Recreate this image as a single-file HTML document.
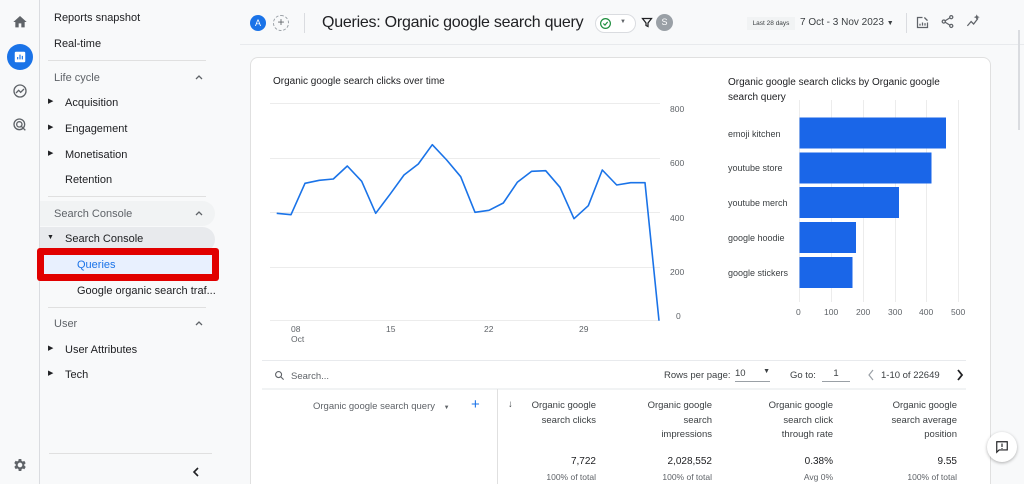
<!DOCTYPE html>
<html><head><meta charset="utf-8"><style>
*{box-sizing:border-box;margin:0;padding:0}
html,body{width:1024px;height:484px;overflow:hidden}
body{background:#f8f9fa;font-family:"Liberation Sans",sans-serif;color:#202124;position:relative}
.a{position:absolute}
.nav{font-size:11px;color:#202124}
.sec{font-size:11px;color:#5f6368}
.t{font-size:9.5px;color:#3c4043}
.g{color:#5f6368}
</style></head><body>
<!-- rail -->
<div class="a" style="left:39px;top:0;width:1px;height:484px;background:#dadce0"></div>
<svg class="a" style="left:12px;top:14px" width="16" height="16" viewBox="0 0 24 24"><path d="M10 20v-6h4v6h5v-8h3L12 3 2 12h3v8z" fill="#5f6368"/></svg>
<div class="a" style="left:7px;top:44px;width:26px;height:26px;border-radius:50%;background:#1a73e8"></div>
<svg class="a" style="left:13px;top:50px" width="14" height="14" viewBox="0 0 24 24"><rect x="3" y="3" width="18" height="18" rx="2" fill="#fff"/><path d="M8 16v-4M12 16V8M16 16v-6" stroke="#1a73e8" stroke-width="2"/></svg>
<svg class="a" style="left:12px;top:83px" width="16" height="16" viewBox="0 0 24 24" fill="none" stroke="#5f6368" stroke-width="2"><circle cx="12" cy="12" r="9"/><path d="M6 15l4-4 3 3 5-5"/></svg>
<svg class="a" style="left:12px;top:117px" width="16" height="16" viewBox="0 0 24 24" fill="none" stroke="#5f6368" stroke-width="2"><circle cx="11" cy="11" r="8"/><circle cx="11" cy="11" r="4"/><path d="M13 13l7 7" /></svg>
<svg class="a" style="left:12px;top:457px" width="16" height="16" viewBox="0 0 24 24"><path d="M19.4 13a7.5 7.5 0 000-2l2.1-1.6-2-3.5-2.5 1a7 7 0 00-1.7-1L15 3h-4l-.4 2.7a7 7 0 00-1.7 1l-2.5-1-2 3.5L6.6 11a7.5 7.5 0 000 2l-2.1 1.6 2 3.5 2.5-1a7 7 0 001.7 1L11 21h4l.4-2.7a7 7 0 001.7-1l2.5 1 2-3.5zM13 15.5a3.5 3.5 0 110-7 3.5 3.5 0 010 7z" fill="#5f6368" transform="translate(-1 0)"/></svg>
<!-- nav -->
<div class="a nav" style="left:54px;top:12px">Reports snapshot</div>
<div class="a nav" style="left:54px;top:38px">Real-time</div>
<div class="a" style="left:48px;top:60px;width:158px;height:1px;background:#e0e0e0"></div>
<div class="a sec" style="left:54px;top:72px">Life cycle</div>
<svg class="a" style="left:194px;top:73px" width="10" height="8" viewBox="0 0 10 8"><path d="M2 6l3-3 3 3" fill="none" stroke="#5f6368" stroke-width="1.3"/></svg>
<div class="a nav" style="left:48px;top:97px;font-size:7px">&#9654;</div><div class="a nav" style="left:65px;top:97px">Acquisition</div>
<div class="a nav" style="left:48px;top:123px;font-size:7px">&#9654;</div><div class="a nav" style="left:65px;top:123px">Engagement</div>
<div class="a nav" style="left:48px;top:149px;font-size:7px">&#9654;</div><div class="a nav" style="left:65px;top:149px">Monetisation</div>
<div class="a nav" style="left:65px;top:174px">Retention</div>
<div class="a" style="left:48px;top:196px;width:158px;height:1px;background:#e0e0e0"></div>
<div class="a" style="left:40px;top:201px;width:175px;height:25px;background:#f1f3f4;border-radius:0 13px 13px 0"></div>
<div class="a sec" style="left:54px;top:208px">Search Console</div>
<svg class="a" style="left:194px;top:209px" width="10" height="8" viewBox="0 0 10 8"><path d="M2 6l3-3 3 3" fill="none" stroke="#5f6368" stroke-width="1.3"/></svg>
<div class="a" style="left:40px;top:227px;width:175px;height:25px;background:#e8eaed;border-radius:0 13px 13px 0"></div>
<div class="a nav" style="left:47px;top:234px;font-size:7px">&#9660;</div><div class="a nav" style="left:65px;top:233px">Search Console</div>
<div class="a" style="left:37px;top:248px;width:182px;height:33px;background:#e10000;border-radius:3px"></div>
<div class="a" style="left:44px;top:255px;width:168px;height:19px;background:#e8f0fe"></div>
<div class="a" style="left:77px;top:259px;font-size:11px;color:#1a73e8">Queries</div>
<div class="a nav" style="left:77px;top:285px">Google organic search traf...</div>
<div class="a" style="left:48px;top:307px;width:158px;height:1px;background:#e0e0e0"></div>
<div class="a sec" style="left:54px;top:318px">User</div>
<svg class="a" style="left:194px;top:319px" width="10" height="8" viewBox="0 0 10 8"><path d="M2 6l3-3 3 3" fill="none" stroke="#5f6368" stroke-width="1.3"/></svg>
<div class="a nav" style="left:48px;top:344px;font-size:7px">&#9654;</div><div class="a nav" style="left:65px;top:344px">User Attributes</div>
<div class="a nav" style="left:48px;top:369px;font-size:7px">&#9654;</div><div class="a nav" style="left:65px;top:369px">Tech</div>
<div class="a" style="left:49px;top:453px;width:163px;height:1px;background:#e0e0e0"></div>
<svg class="a" style="left:191px;top:466px" width="10" height="12" viewBox="0 0 10 12"><path d="M7 2L3 6l4 4" fill="none" stroke="#202124" stroke-width="1.6"/></svg>
<!-- header -->
<div class="a" style="left:250px;top:15px;width:16px;height:16px;border-radius:50%;background:#1a73e8;color:#fff;font-size:9px;text-align:center;line-height:16px">A</div>
<div class="a" style="left:273px;top:15px;width:16px;height:16px;border-radius:50%;border:1px dashed #9aa0a6;color:#5f6368;font-size:12px;text-align:center;line-height:13px">+</div>
<div class="a" style="left:304px;top:13px;width:1px;height:20px;background:#dadce0"></div>
<div class="a" style="left:322px;top:14px;font-size:16px;letter-spacing:-0.25px;color:#202124;white-space:nowrap">Queries: Organic google search query</div>
<div class="a" style="left:595px;top:14px;width:41px;height:19px;border:1px solid #dadce0;border-radius:10px;background:#fff"></div>
<svg class="a" style="left:599px;top:17px" width="13" height="13" viewBox="0 0 24 24" fill="none" stroke="#1e8e3e" stroke-width="2.2"><circle cx="12" cy="12" r="9"/><path d="M8 12l3 3 5-6"/></svg>
<div class="a g" style="left:620px;top:19px;font-size:6px">&#9660;</div>
<svg class="a" style="left:641px;top:16px" width="12" height="13" viewBox="0 0 24 24"><path d="M3 4h18l-7 9v7l-4-2v-5z" fill="none" stroke="#202124" stroke-width="2.5"/></svg>
<div class="a" style="left:656px;top:14px;width:17px;height:17px;border-radius:50%;background:#9aa0a6;color:#fff;font-size:9px;text-align:center;line-height:17px">S</div>
<div class="a" style="left:747px;top:17px;width:48px;height:13px;background:#f1f3f4;font-size:6.5px;color:#3c4043;text-align:center;line-height:13px">Last 28 days</div>
<div class="a" style="left:800px;top:17px;font-size:10px;color:#3c4043">7 Oct - 3 Nov 2023 <span style="font-size:7px">&#9660;</span></div>
<div class="a" style="left:906px;top:13px;width:1px;height:20px;background:#dadce0"></div>
<svg class="a" style="left:915px;top:15px" width="15" height="15" viewBox="0 0 24 24" fill="none" stroke="#5f6368" stroke-width="2"><path d="M20 12v8H4V4h8"/><path d="M8 17v-3M12 17v-5M16 17v-4M15 4l5 5"/></svg>
<svg class="a" style="left:940px;top:14px" width="15" height="15" viewBox="0 0 24 24" fill="none" stroke="#5f6368" stroke-width="2"><circle cx="18" cy="5" r="2.5"/><circle cx="6" cy="12" r="2.5"/><circle cx="18" cy="19" r="2.5"/><path d="M8 11l8-5M8 13l8 5"/></svg>
<svg class="a" style="left:965px;top:14px" width="16" height="15" viewBox="0 0 24 24" fill="none" stroke="#5f6368" stroke-width="2"><path d="M3 19l6-7 4 4 7-9"/><path d="M18 3l.7 1.5L20 5l-1.3.5L18 7l-.7-1.5L16 5l1.3-.5z" fill="#5f6368"/></svg>
<div class="a" style="left:240px;top:44px;width:784px;height:1px;background:#e8eaed"></div>
<div class="a" style="left:1018px;top:30px;width:2px;height:100px;background:#dadce0"></div>
<!-- card -->
<div class="a" style="left:250px;top:57px;width:741px;height:440px;background:#fff;border:1px solid #e0e0e0;border-radius:8px"></div>
<div class="a t" style="left:273px;top:76px;font-size:10px;color:#202124">Organic google search clicks over time</div>
<svg class="a" style="left:0;top:0" width="1024" height="360">
<g stroke="#ececec" stroke-width="1"><line x1="270" y1="103.5" x2="660" y2="103.5"/><line x1="270" y1="158.5" x2="660" y2="158.5"/><line x1="270" y1="212.5" x2="660" y2="212.5"/><line x1="270" y1="267.5" x2="660" y2="267.5"/><line x1="270" y1="320.5" x2="660" y2="320.5"/>
<line x1="799.5" y1="100" x2="799.5" y2="302"/><line x1="831.5" y1="100" x2="831.5" y2="302"/><line x1="863.5" y1="100" x2="863.5" y2="302"/><line x1="895.5" y1="100" x2="895.5" y2="302"/><line x1="926.5" y1="100" x2="926.5" y2="302"/><line x1="958.5" y1="100" x2="958.5" y2="302"/></g>
<polyline fill="none" stroke="#1a73e8" stroke-width="1.6" stroke-linejoin="round" points="276.7,213.3 291,214.7 305,183.3 319.3,180.3 333.3,179 347.3,166 361.7,181.3 375.7,213.3 390,194.3 404,175 418.3,164 432.3,144.7 446.7,160 460.7,176.7 475,212.3 489,210.3 503.3,203 517.3,182.3 531.7,171.3 545.7,170.7 560,187.3 574,218.7 588.3,205.7 602.3,170 616.7,185 630.7,182.7 645,182.7 659,320.7"/>
<g fill="#1a66e8"><rect x="799.5" y="117.5" width="146.5" height="31"/><rect x="799.5" y="152.5" width="132" height="31"/><rect x="799.5" y="187" width="99.5" height="31"/><rect x="799.5" y="222" width="56.5" height="31"/><rect x="799.5" y="257" width="53" height="31"/></g>
<g font-family="Liberation Sans" font-size="8.5" fill="#5f6368"><text x="670" y="112">800</text><text x="670" y="166">600</text><text x="670" y="221">400</text><text x="670" y="275">200</text><text x="676" y="319">0</text>
<text x="291" y="332">08</text><text x="291" y="342">Oct</text><text x="386" y="332">15</text><text x="484" y="332">22</text><text x="579" y="332">29</text>
<text x="796" y="315">0</text><text x="824" y="315">100</text><text x="856" y="315">200</text><text x="888" y="315">300</text><text x="919" y="315">400</text><text x="951" y="315">500</text></g>
<g font-family="Liberation Sans" font-size="9" fill="#3c4043"><text x="728" y="137">emoji kitchen</text><text x="728" y="171">youtube store</text><text x="728" y="206">youtube merch</text><text x="728" y="241">google hoodie</text><text x="728" y="276">google stickers</text></g>
</svg>
<div class="a" style="left:728px;top:75px;font-size:10px;line-height:15px;color:#202124;width:240px">Organic google search clicks by Organic google search query</div>
<!-- table -->
<div class="a" style="left:262px;top:360px;width:704px;height:1px;background:#e8eaed"></div>
<svg class="a" style="left:274px;top:370px" width="11" height="11" viewBox="0 0 24 24" fill="none" stroke="#5f6368" stroke-width="2.4"><circle cx="10" cy="10" r="6.5"/><path d="M15 15l6 6"/></svg>
<div class="a t" style="left:291px;top:371px;color:#5f6368">Search...</div>
<div class="a t" style="left:664px;top:370px">Rows per page:</div>
<div class="a t" style="left:735px;top:368px;width:35px;border-bottom:1px solid #9aa0a6;padding-bottom:2px">10 <span style="float:right;font-size:7px">&#9660;</span></div>
<div class="a t" style="left:790px;top:370px">Go to:</div>
<div class="a t" style="left:822px;top:368px;width:28px;border-bottom:1px solid #9aa0a6;text-align:center;padding-bottom:2px">1</div>
<svg class="a" style="left:866px;top:369px" width="10" height="12" viewBox="0 0 10 12"><path d="M7 1L3 6l4 5" fill="none" stroke="#9aa0a6" stroke-width="1.2"/></svg>
<div class="a t" style="left:881px;top:370px">1-10 of 22649</div>
<svg class="a" style="left:955px;top:368px" width="10" height="14" viewBox="0 0 10 14"><path d="M3 2l4 5-4 5" fill="none" stroke="#202124" stroke-width="1.8"/></svg>
<div class="a" style="left:262px;top:388px;width:704px;height:2px;background:#f1f3f4"></div>
<div class="a" style="left:497px;top:389px;width:1px;height:100px;background:#e0e0e0"></div>
<div class="a t" style="left:313px;top:401px;color:#5f6368">Organic google search query <span style="font-size:6px;margin-left:6px">&#9660;</span></div>
<div class="a" style="left:471px;top:396px;font-size:15px;color:#1a73e8">+</div>
<div class="a t" style="left:508px;top:399px">&#8595;</div>
<div class="a t" style="left:505px;top:399px;width:91px;text-align:right;line-height:14.5px">Organic google<br>search clicks</div>
<div class="a t" style="left:610px;top:399px;width:102px;text-align:right;line-height:14.5px">Organic google<br>search<br>impressions</div>
<div class="a t" style="left:730px;top:399px;width:103px;text-align:right;line-height:14.5px">Organic google<br>search click<br>through rate</div>
<div class="a t" style="left:855px;top:399px;width:102px;text-align:right;line-height:14.5px">Organic google<br>search average<br>position</div>
<div class="a" style="left:520px;top:456px;width:76px;text-align:right;font-size:10px">7,722</div>
<div class="a" style="left:620px;top:456px;width:92px;text-align:right;font-size:10px">2,028,552</div>
<div class="a" style="left:740px;top:456px;width:93px;text-align:right;font-size:10px">0.38%</div>
<div class="a" style="left:870px;top:456px;width:87px;text-align:right;font-size:10px">9.55</div>
<div class="a g" style="left:520px;top:472px;width:76px;text-align:right;font-size:8.5px">100% of total</div>
<div class="a g" style="left:620px;top:472px;width:92px;text-align:right;font-size:8.5px">100% of total</div>
<div class="a g" style="left:740px;top:472px;width:93px;text-align:right;font-size:8.5px">Avg 0%</div>
<div class="a g" style="left:870px;top:472px;width:87px;text-align:right;font-size:8.5px">100% of total</div>
<div class="a" style="left:987px;top:432px;width:30px;height:30px;border-radius:50%;background:#fff;box-shadow:0 1px 3px rgba(0,0,0,.3)"></div>
<svg class="a" style="left:995px;top:440px" width="14" height="14" viewBox="0 0 24 24" fill="none" stroke="#202124" stroke-width="2"><path d="M3 3h18v14H7l-4 4z"/><path d="M12 6v6M12 14v1.5"/></svg>
</body></html>
